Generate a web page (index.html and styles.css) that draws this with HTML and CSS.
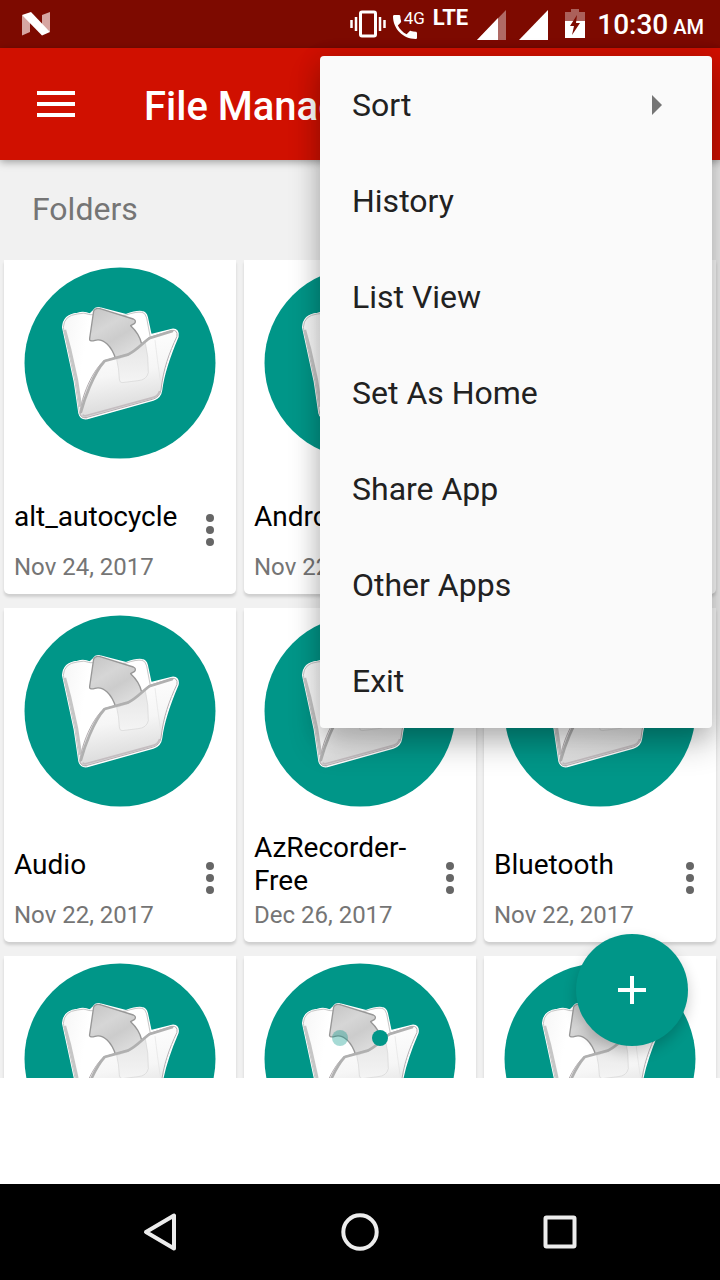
FILE: index.html
```html
<!DOCTYPE html>
<html lang="en">
<head>
<meta charset="utf-8">
<meta name="viewport" content="width=device-width, initial-scale=1">
<title>File Manager</title>
<link rel="stylesheet" href="styles.css">
</head>
<body>
<svg class="sprite" aria-hidden="true">
  <defs>
    <linearGradient id="front" x1="0.3" y1="0" x2="0.5" y2="1">
      <stop offset="0" stop-color="#ffffff"/><stop offset="0.5" stop-color="#f6f6f6"/><stop offset="1" stop-color="#d6d6d6"/>
    </linearGradient>
    <linearGradient id="back" x1="0" y1="0" x2="1" y2="0.2">
      <stop offset="0" stop-color="#f6f6f6"/><stop offset="0.3" stop-color="#ffffff"/>
    </linearGradient>
    <linearGradient id="arrow" x1="0" y1="0" x2="0.6" y2="1">
      <stop offset="0" stop-color="#c4c4c4"/><stop offset="0.4" stop-color="#d6d6d6"/><stop offset="0.65" stop-color="#cccccc"/><stop offset="1" stop-color="#dedede"/>
    </linearGradient>
    <linearGradient id="ghost" x1="0" y1="0" x2="0" y2="1">
      <stop offset="0" stop-color="#e6e6e6"/><stop offset="1" stop-color="#f4f4f4"/>
    </linearGradient>
    <symbol id="folder" viewBox="0 0 192 192">
      <circle cx="96" cy="96" r="95.5" fill="#009688"/>
      <g transform="translate(16 23) scale(0.3333)" stroke-linejoin="round">
        <path d="M68 112Q70 74 112 70Q132 64 150 72L160 62Q168 50 180 54L258 74Q290 62 306 65Q318 66 322 82L333 134L396 118Q418 116 414 140C396 182 372 240 365 300Q362 324 340 330L142 386Q122 389 117 370L103 275Z" fill="#fff" stroke="#fff" stroke-width="4"/>
        <path d="M70 112Q72 76 112 72Q132 66 150 74L255 76Q290 64 306 67Q316 68 320 84L340 190L140 384Q122 386 118 366L105 275Z" fill="url(#back)" stroke="#a9a9a9" stroke-width="2"/>
        <path d="M74 120L90 180L110 270L122 350" fill="none" stroke="#c6c6c6" stroke-width="9"/>
        <path d="M161 63Q167 52 180 56L280 87Q290 92 284 100L272 107C286 120 300 138 305 162L265 210L228 210C216 168 190 144 165 151Q146 156 149 145Z" fill="url(#arrow)" stroke="#979797" stroke-width="4"/>
        <path d="M121 374C118 340 150 250 192 212L262 193C290 182 306 158 326 143L395 121Q414 119 411 139C388 188 370 236 363 300Q359 321 340 327L142 382Q125 385 121 374Z" fill="url(#front)" stroke="#b4aeb1" stroke-width="3"/>
        <path d="M230 208L262 197C288 186 300 170 316 158Q326 200 325 248Q320 270 294 272L246 278Q238 277 238 267Q237 236 230 208Z" fill="url(#ghost)" stroke="#d5d5d5" stroke-width="2"/>
        <path d="M345 150Q352 210 361 272" fill="none" stroke="#e2e2e2" stroke-width="2"/>
        <path d="M123 366C132 330 160 250 194 213L263 194C290 182 306 160 328 145L396 124" fill="none" stroke="#b0b0b0" stroke-width="8" stroke-linecap="round"/>
        <path d="M128 374Q132 380 142 376L340 322Q354 318 359 303" fill="none" stroke="#c4bdc0" stroke-width="5"/>
      </g>
    </symbol>
    <symbol id="more" viewBox="0 0 8 32">
      <g fill="#666"><circle cx="4" cy="4" r="4"/><circle cx="4" cy="16" r="4"/><circle cx="4" cy="28" r="4"/></g>
    </symbol>
  </defs>
</svg>

<div class="screen">
  <header class="status">
    <svg class="nougat" width="28" height="24" viewBox="0 0 28 24" role="img" aria-label="Android N">
      <path d="M0 3L8 8V20L0 23.500ZM20 3L28 0V20L20 14Z" fill="#d6a6a2"/>
      <path d="M0 3L9 0L28 20L20 23.500Z" fill="#fff"/>
    </svg>
    <div class="tray">
      <svg width="36" height="28" viewBox="0 0 36 28" role="img" aria-label="Vibrate">
        <rect x="10.500" y="2" width="15" height="24" rx="1.500" fill="none" stroke="#fff" stroke-width="3"/>
        <path d="M1.500 10v8M6 7v14M30 7v14M34.500 10v8" stroke="#fff" stroke-width="2.500"/>
      </svg>
      <div class="call">
        <svg width="24" height="24" viewBox="3 3 18 18" role="img" aria-label="Call"><path fill="#fff" d="M6.620 10.790c1.440 2.830 3.760 5.140 6.590 6.590l2.200-2.200c.27-.27.67-.36 1.020-.24 1.120.37 2.330.57 3.570.57.55 0 1 .45 1 1V20c0 .55-.45 1-1 1-9.390 0-17-7.610-17-17 0-.55.45-1 1-1h3.500c.55 0 1 .45 1 1 0 1.250.2 2.450.57 3.570.11.35.03.74-.25 1.020l-2.200 2.200z"/></svg>
        <span class="net">4G</span>
      </div>
      <span class="lte">LTE</span>
      <svg class="sim" width="30" height="30" viewBox="0 0 30 30" role="img" aria-label="Signal, SIM 1"><path d="M0 30L29 0V30Z" fill="#b06a65"/><path d="M0 30L21 8V30Z" fill="#fff"/></svg>
      <svg class="sim" width="30" height="30" viewBox="0 0 30 30" role="img" aria-label="Signal, SIM 2"><path d="M0 30L29 0V30Z" fill="#fff"/></svg>
      <svg class="battery" width="20" height="30" viewBox="0 0 20 30" role="img" aria-label="Battery charging">
        <path d="M0 3H6V0H14V3H20V12H0Z" fill="#ab605a"/><path d="M0 12H20V29H0Z" fill="#fff"/>
        <path d="M12 6L5 17H9L7 26L15 14H11Z" fill="#7d0a00"/>
      </svg>
      <time class="clock">10:30 <small class="ampm">AM</small></time>
    </div>
  </header>

  <div class="appbar">
    <button class="burger" aria-label="Open navigation"><svg width="38" height="26" viewBox="0 0 38 26"><path d="M0 2H38M0 13H38M0 24H38" stroke="#fff" stroke-width="4"/></svg></button>
    <h1 class="title">File Manager</h1>
  </div>

  <main class="content">
    <h2 class="section">Folders</h2>
    <div class="grid">
      <article class="card"><svg class="pic"><use href="#folder"/></svg><div class="info"><h3 class="name">alt_autocycle</h3><p class="date">Nov 24, 2017</p><button class="more" aria-label="More options"><svg width="8" height="32"><use href="#more"/></svg></button></div></article>
      <article class="card"><svg class="pic"><use href="#folder"/></svg><div class="info"><h3 class="name">Android</h3><p class="date">Nov 22, 2017</p></div></article>
      <article class="card"><svg class="pic"><use href="#folder"/></svg><div class="info"></div></article>
      <article class="card"><svg class="pic"><use href="#folder"/></svg><div class="info"><h3 class="name">Audio</h3><p class="date">Nov 22, 2017</p><button class="more" aria-label="More options"><svg width="8" height="32"><use href="#more"/></svg></button></div></article>
      <article class="card"><svg class="pic"><use href="#folder"/></svg><div class="info"><h3 class="name">AzRecorder-Free</h3><p class="date">Dec 26, 2017</p><button class="more" aria-label="More options"><svg width="8" height="32"><use href="#more"/></svg></button></div></article>
      <article class="card"><svg class="pic"><use href="#folder"/></svg><div class="info"><h3 class="name">Bluetooth</h3><p class="date">Nov 22, 2017</p><button class="more" aria-label="More options"><svg width="8" height="32"><use href="#more"/></svg></button></div></article>
      <article class="card"><svg class="pic"><use href="#folder"/></svg><div class="info"></div></article>
      <article class="card"><svg class="pic"><use href="#folder"/></svg><div class="info"></div></article>
      <article class="card"><svg class="pic"><use href="#folder"/></svg><div class="info"></div></article>
    </div>
    <div class="pager" aria-hidden="true"><span class="dot dot-off"></span><span class="dot"></span></div>
    <button class="fab" aria-label="Add"><svg width="28" height="28" viewBox="0 0 28 28"><path d="M0 14H28M14 0V28" stroke="#fff" stroke-width="4"/></svg></button>
  </main>

  <div class="banner"></div>

  <nav class="navbar">
    <button class="key" aria-label="Back"><svg width="40" height="40" viewBox="0 0 40 40"><path d="M34 3.500V36.500L6 20Z"/></svg></button>
    <button class="key" aria-label="Home"><svg width="40" height="40" viewBox="0 0 40 40"><circle cx="20" cy="20" r="16.700"/></svg></button>
    <button class="key" aria-label="Recent apps"><svg width="40" height="40" viewBox="0 0 40 40"><rect x="5.500" y="5.500" width="29" height="29" rx="1"/></svg></button>
  </nav>

  <ul class="menu">
    <li><button class="item">Sort <svg width="10" height="20" viewBox="0 0 10 20"><path d="M0 0L10 10L0 20Z" fill="#757575"/></svg></button></li>
    <li><button class="item">History</button></li>
    <li><button class="item">List View</button></li>
    <li><button class="item">Set As Home</button></li>
    <li><button class="item">Share App</button></li>
    <li><button class="item">Other Apps</button></li>
    <li><button class="item">Exit</button></li>
  </ul>
</div>
</body>
</html>
```
FILE: styles.css
```css
* { box-sizing: border-box; }
body, h1, h2, h3, p, ul { margin: 0; padding: 0; }
body { font-family: Roboto, "Noto Sans", sans-serif; background: #fff; }
svg { display: block; flex: none; }
button { font: inherit; color: inherit; background: none; border: 0; padding: 0; cursor: pointer; }
.sprite { position: absolute; width: 0; height: 0; }

.screen { position: relative; height: 100vh; display: flex; flex-direction: column; overflow: hidden; }

.status { flex: none; height: 48px; padding: 0 16px 0 22px; display: flex; justify-content: space-between; align-items: center; background: #7d0a00; color: #fff; }
.tray { display: flex; align-items: center; }
.call { display: flex; align-items: flex-start; margin: 0 9px 0 7px; width: 31px; }
.call svg { margin-top: 6px; }
.net { margin-left: -13px; font-size: 17px; line-height: 18px; }
.lte { margin-right: 9px; padding-bottom: 13px; font-size: 22px; line-height: 20px; font-weight: 700; }
.sim { margin: 2px 12px 0 0; }
.battery { margin: 0 12px 0 4px; }
.clock { padding-top: 4px; font-size: 28px; line-height: 32px; font-weight: 500; white-space: nowrap; }
.ampm { font-size: 20px; margin-left: -2px; }

.appbar { flex: none; height: 112px; padding: 0 37px; display: flex; align-items: center; gap: 69px; background: #d01000; color: #fff; box-shadow: 0 2px 8px rgba(0, 0, 0, 0.35); z-index: 1; }
.title { font-size: 40px; line-height: 48px; font-weight: 500; padding-top: 6px; }

.content { position: relative; flex: 1; min-height: 0; overflow: hidden; background: #f1f1f1; }
.section { padding: 29px 32px 31px; font-size: 32px; line-height: 40px; font-weight: 400; color: #757575; }
.grid { display: grid; grid-template-columns: repeat(3, 1fr); gap: 14px 8px; padding: 0 4px; }
.card { height: 334px; padding-top: 7px; background: #fff; border-radius: 0 0 5px 5px; box-shadow: 0 3px 3px rgba(0, 0, 0, 0.14); }
.pic { width: 192px; height: 192px; margin: 0 auto 24px; }
.info { display: grid; grid-template-columns: 1fr 52px; padding-left: 10px; }
.name { height: 66px; display: flex; align-items: center; font-size: 28px; line-height: 33px; font-weight: 400; color: #000; }
.date { grid-row: 2; font-size: 24px; line-height: 36px; color: #757575; }
.more { grid-area: 1 / 2 / 3 / 3; padding-bottom: 8px; display: flex; align-items: center; justify-content: center; }

.pager { position: absolute; left: 0; right: 0; bottom: 32px; display: flex; justify-content: center; gap: 24px; }
.dot { width: 16px; height: 16px; border-radius: 50%; background: #009688; }
.dot-off { opacity: 0.35; }
.fab { position: absolute; right: 32px; bottom: 32px; width: 112px; height: 112px; border-radius: 50%; background: #009688; box-shadow: 0 6px 14px rgba(0, 0, 0, 0.2); display: flex; align-items: center; justify-content: center; }

.banner { flex: none; height: 106px; background: #fff; }

.navbar { flex: none; height: 96px; display: flex; justify-content: center; align-items: center; gap: 160px; background: #000; }
.key svg { fill: none; stroke: #ececec; stroke-width: 4; stroke-linejoin: round; }

.menu { position: absolute; top: 56px; right: 8px; width: 392px; z-index: 2; list-style: none; background: #fafafa; border-radius: 4px; box-shadow: 0 16px 32px rgba(0, 0, 0, 0.24), 0 4px 24px rgba(0, 0, 0, 0.14); }
.item { width: 100%; height: 96px; padding: 2px 50px 0 32px; display: flex; align-items: center; justify-content: space-between; font-size: 32px; line-height: 40px; color: #212121; text-align: left; }
```
